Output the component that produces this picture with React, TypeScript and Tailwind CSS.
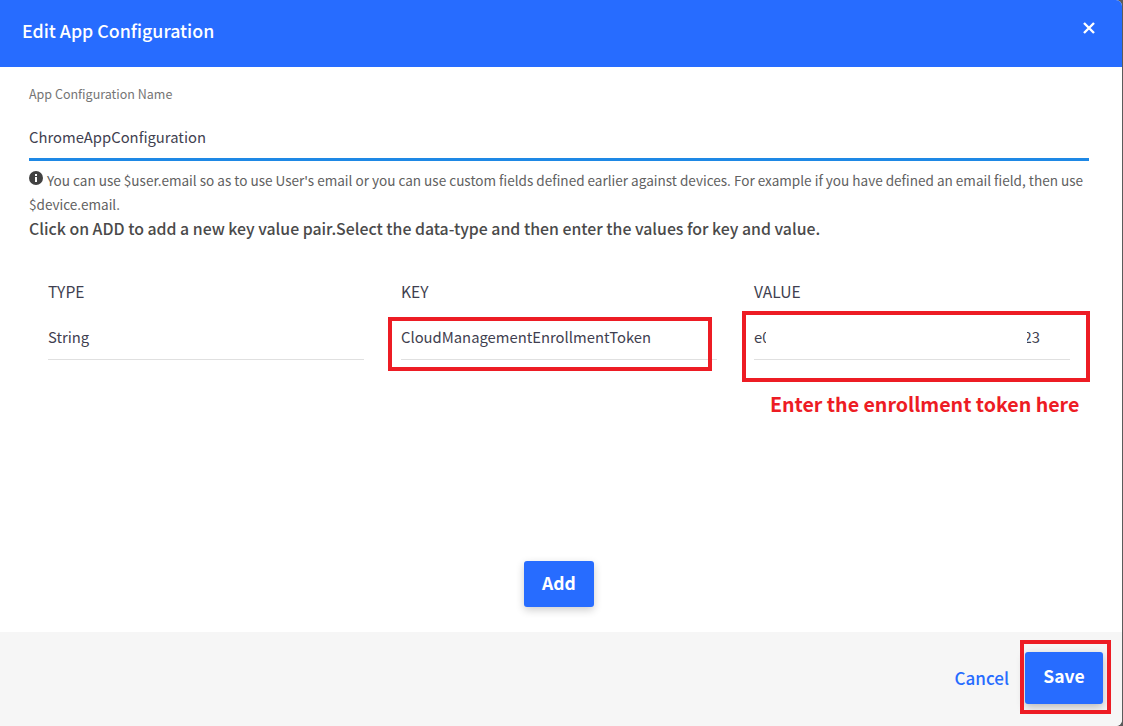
const font = "font-['Noto_Sans_CJK_KR','Noto_Sans',sans-serif]";

function Field({ label, children }: { label: string; children: React.ReactNode }) {
  return (
    <div className="w-[316px]">
      <div className="h-[24px] text-[15.6px] leading-[24px] text-[#3f3f50]">{label}</div>
      <div className="mt-[22px] flex h-[35px] items-start border-b border-[#e0e0e0] text-[14.8px] leading-[24px] text-[#3f3f50]">
        {children}
      </div>
    </div>
  );
}

export default function App() {
  return (
    <div className={`${font} relative h-[726px] w-[1123px] overflow-hidden bg-[#5b5b5b]`}>
      <div className="flex h-[726px] w-[1122px] flex-col overflow-hidden rounded-tr-[6px] rounded-br-[6px] bg-white">
        {/* Header */}
        <div className="flex h-[67px] shrink-0 items-start justify-between bg-[#276cff] pl-[22px] pr-[26px]">
          <h1 className="mt-[17px] text-[17.8px] leading-[26px] font-medium text-white">Edit App Configuration</h1>
          <svg className="mt-[21px]" width="14" height="14" viewBox="0 0 14 14" fill="none">
            <path d="M2 2L12 12M12 2L2 12" stroke="white" strokeWidth="2.4" />
          </svg>
        </div>

        {/* Body */}
        <div className="flex flex-1 flex-col px-[29px]">
          <div className="mt-[18px] w-[1060px] text-[12.5px] leading-[18px] text-[#757575]">App Configuration Name</div>
          <div className="mt-[22px] h-[36px] w-[1060px] border-b-[3px] border-[#1e88e5] text-[14.8px] leading-[24px] text-[#3f3f50]">
            ChromeAppConfiguration
          </div>
          <p className="mt-[7px] w-[1060px] text-[13.55px] leading-[24px] text-[#616161]">
            <svg className="mr-[4px] inline-block align-[1px]" width="14" height="14" viewBox="0 0 14 14">
              <circle cx="7" cy="7" r="7" fill="#424242" />
              <rect x="6" y="6" width="2" height="5" fill="white" />
              <rect x="6" y="3" width="2" height="2" fill="white" />
            </svg>
            You can use $user.email so as to use User's email or you can use custom fields defined earlier against devices. For example if you have defined an email field, then use $device.email.
          </p>
          <p className="mt-[1px] text-[15.85px] leading-[24px] font-medium text-[#4a4a4a]">
            Click on ADD to add a new key value pair.Select the data-type and then enter the values for key and value.
          </p>

          <div className="mt-[38px] flex gap-[37px] pl-[19px]">
            <Field label="TYPE">String</Field>
            <Field label="KEY">CloudManagementEnrollmentToken</Field>
            <Field label="VALUE">
              <div className="flex w-[286px] justify-between">
                <span className="w-[12px] overflow-hidden whitespace-nowrap">e0</span>
                <span className="flex w-[13px] justify-end overflow-hidden whitespace-nowrap">
                  <span className="shrink-0">23</span>
                </span>
              </div>
            </Field>
          </div>

          <div className="mt-[201px] flex justify-center pr-[4px]">
            <button className="h-[46px] w-[70px] rounded-[3px] bg-[#276cff] pb-[2px] text-[17.5px] font-bold text-white shadow-[0_3px_8px_rgba(0,0,0,0.2)]">
              Add
            </button>
          </div>
        </div>

        {/* Footer */}
        <div className="flex h-[94px] shrink-0 items-start justify-end gap-[16px] bg-[#f6f6f6] pr-[19px] pt-[20px]">
          <button className="mt-[14px] text-[17px] leading-[24px] font-medium text-[#276cff]">Cancel</button>
          <button className="h-[52px] w-[78px] rounded-[3px] bg-[#276cff] pb-[3px] text-[17.5px] font-bold text-white shadow-[0_3px_8px_rgba(0,0,0,0.25)]">
            Save
          </button>
        </div>
      </div>

      {/* Annotations drawn over the screenshot */}
      <div className="absolute left-[388px] top-[317px] h-[54px] w-[324px] border-4 border-[#ed1c24]" />
      <div className="absolute left-[742px] top-[311px] h-[71px] w-[348px] border-4 border-[#ed1c24]" />
      <div className="absolute left-[1020px] top-[640px] h-[74px] w-[91px] border-4 border-[#ed1c24]" />
      <div className="absolute left-[770px] top-[390px] text-[19.6px] leading-[27px] font-bold text-[#ed1c24]">
        Enter the enrollment token here
      </div>
    </div>
  );
}
